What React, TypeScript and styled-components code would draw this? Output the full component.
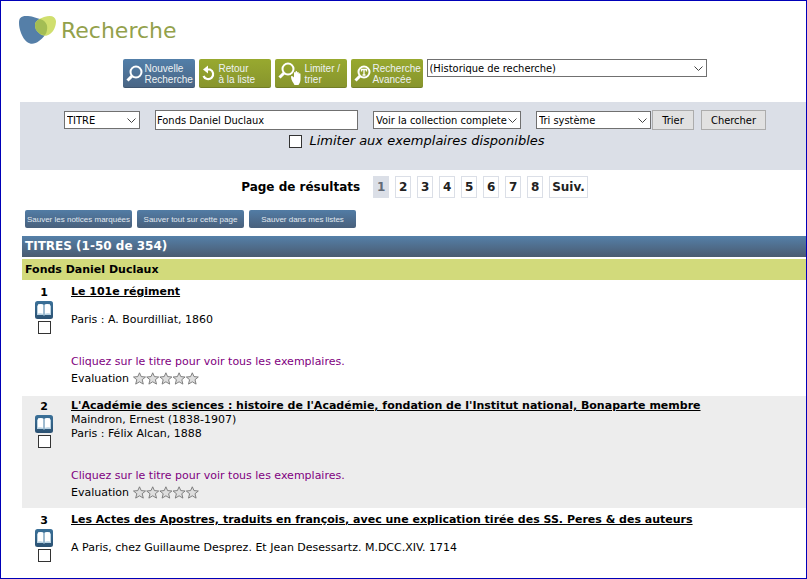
import React from 'react';
import styled, { createGlobalStyle } from 'styled-components';

const uiFont = '"DejaVu Sans Condensed", "DejaVu Sans", sans-serif';
const buttonFont = '"Liberation Sans", Arial, sans-serif';

const GlobalStyle = createGlobalStyle`
  * { box-sizing: border-box; }
  body {
    margin: 0;
    background: #fff;
    color: #000;
    font-family: Verdana, "DejaVu Sans", sans-serif;
    font-size: 11px;
    line-height: 14px;
  }
`;

const Page = styled.div`
  min-height: 100vh;
  border: 1px solid #0000b8;
  padding: 12px 0 8px;
`;

const Header = styled.header`
  display: flex;
  align-items: center;
  gap: 4px;
  padding-left: 18px;
  height: 34px;
`;

const Title = styled.h1`
  margin: 0;
  padding-top: 1px;
  color: #93a14b;
  font-size: 22px;
  font-weight: 400;
  line-height: 32px;
`;

const Toolbar = styled.nav`
  display: flex;
  justify-content: center;
  gap: 4px;
  margin: 12px 0 14px 22px;
`;

const ToolButton = styled.button<{ $primary?: boolean }>`
  display: flex;
  align-items: center;
  gap: 2px;
  width: 72px;
  height: 29px;
  padding: 0 0 0 3px;
  border: 0;
  border-radius: 2px;
  background: ${p => p.$primary
    ? 'linear-gradient(#527fa9, #4a6584)'
    : 'linear-gradient(#98a92f, #87942d)'};
  box-shadow: inset 0 -1px 0 rgba(0, 0, 0, 0.15);
  color: #edf2f3;
  font-family: ${buttonFont};
  font-size: 10px;
  line-height: 11px;
  text-align: left;
  white-space: nowrap;

  svg { flex: none; }
`;

const SelectBox = styled.span<{ $width: number }>`
  display: grid;
  align-items: center;
  width: ${p => p.$width}px;
  height: 18px;

  > * { grid-area: 1 / 1; }
  svg {
    justify-self: end;
    margin: 2px 4px 0 0;
    pointer-events: none;
  }
`;

const Select = styled.select`
  appearance: none;
  width: 100%;
  height: 18px;
  padding: 0 12px 0 2px;
  border: 1px solid #707070;
  border-radius: 0;
  background: #fff;
  color: #000;
  font-family: ${uiFont};
  font-size: 11px;
`;

const SearchForm = styled.form`
  display: flex;
  flex-direction: column;
  align-items: center;
  gap: 2px;
  margin-left: 19px;
  padding: 8px 0 20px 4px;
  background: #dbdfe7;
`;

const SearchFields = styled.div`
  display: flex;
  align-items: center;
  gap: 15px;
`;

const SortGroup = styled.div`
  display: flex;
  align-items: center;
  gap: 1px;
`;

const Actions = styled.div`
  display: flex;
  gap: 7px;
`;

const Query = styled.input`
  width: 203px;
  height: 20px;
  padding: 0 1px;
  border: 1px solid #707070;
  background: #fff;
  color: #000;
  font-family: ${uiFont};
  font-size: 11px;
`;

const FormButton = styled.button<{ $wide?: boolean }>`
  width: ${p => (p.$wide ? 65 : 42)}px;
  height: 20px;
  padding: 0;
  border: 1px solid #acacac;
  background: #e1e1e1;
  color: #000;
  font-family: ${uiFont};
  font-size: 11px;
`;

const Check = styled.input`
  appearance: none;
  width: 13px;
  height: 13px;
  margin: 0;
  border: 1px solid #333;
  background: #fff;

  &:checked { background: #333; box-shadow: inset 0 0 0 2px #fff; }
`;

const Availability = styled.label`
  display: flex;
  gap: 7px;
  align-items: center;
  padding-left: 4px;
  font-size: 13px;
  font-style: italic;
  line-height: 18px;
`;

const Pager = styled.nav`
  display: flex;
  justify-content: center;
  align-items: center;
  gap: 6px;
  margin: 6px 0 12px 22px;
  font-size: 12px;
  font-weight: 700;
  line-height: 20px;
`;

const PagerLabel = styled.span`
  margin-right: 7px;
`;

const PageLink = styled.a<{ $current?: boolean }>`
  min-width: 16px;
  padding: 0 2px;
  border: 1px solid #dbdfe7;
  background: ${p => (p.$current ? '#dbdfe7' : '#fff')};
  color: ${p => (p.$current ? '#626a76' : '#222')};
  text-align: center;
  text-decoration: none;
`;

const SaveBar = styled.div`
  display: flex;
  gap: 5px;
  padding: 0 0 8px 24px;
`;

const SaveButton = styled.button`
  width: 107px;
  height: 18px;
  padding: 0;
  border: 0;
  border-radius: 2px;
  background: linear-gradient(#527ca5, #49607c);
  color: #e0e8ef;
  font-family: ${buttonFont};
  font-size: 8px;
  white-space: nowrap;
`;

const Results = styled.main`
  display: flex;
  flex-direction: column;
  gap: 2px;
  margin-left: 21px;
`;

const ResultsTitle = styled.h2`
  margin: 0;
  padding-left: 3px;
  background: linear-gradient(#5580a9, #4a5b70);
  color: #fff;
  font-size: 12px;
  line-height: 21px;
`;

const GroupTitle = styled.h3`
  margin: 0;
  padding-left: 3px;
  background: #d2da7b;
  font-size: 11px;
  line-height: 21px;
`;

const Records = styled.ol`
  display: flex;
  flex-direction: column;
  gap: 2px;
  margin: 0;
  padding: 0;
  list-style: none;
`;

const Record = styled.li`
  display: flex;
  gap: 5px;
  padding: 3px 0 7px;

  &:nth-child(even) { background: #ededed; }
`;

const Marker = styled.div`
  display: flex;
  flex: none;
  flex-direction: column;
  align-items: center;
  gap: 2px;
  width: 44px;
  padding-top: 1px;
  font-weight: 700;
`;

const MarkerNumber = styled.span`
  line-height: 13px;
`;

const Details = styled.div`
  min-width: 0;
`;

const TitleLink = styled.a`
  color: #000;
  font-weight: 700;
  text-underline-offset: 1px;
`;

const Line = styled.div`
  min-height: 14px;
`;

const Notice = styled.p`
  margin: 28px 0 0;
  color: #800080;
`;

const Rating = styled.div`
  display: flex;
  align-items: center;
  gap: 4px;
  padding-top: 1px;
  line-height: 17px;
`;

const Logo = () => (
  <svg width="38" height="30" viewBox="0 0 38 30" aria-hidden="true">
    <path d="M0 8C0 3 2 1 7 1c6 0 9 1.500 14 3 6 2 8 6 7 11-1 5-4 8-8 11-4 3-8 4-12 1C3 23 0 14 0 8z" fill="#557fa8" />
    <path d="M16 10c0-4 4-6 9-8 7-2 11-1 12 4 0 5-2 10-6 13-4 3-8 2-11-1-3-2-4-5-4-8z" fill="#d0df6e" />
    <path d="M16 10c0-3 2-4.500 5-6 6 2 8 6 7 11-.4 2-1 4-2 5-3 0-5-1-6-2-3-2-4-5-4-8z" fill="#a3bd54" />
  </svg>
);

const Lens = ({ extra }: { extra?: 'hand' | 'text' }) => (
  <svg width={extra === 'hand' ? 25 : 17} height="24" viewBox={extra === 'hand' ? '0 0 25 24' : '0 0 17 24'} fill="none" aria-hidden="true">
    <circle cx="10" cy={extra === 'hand' ? 7 : 10} r="5.500" stroke="#fff" strokeWidth="2" />
    <path d={extra === 'hand' ? 'M6 11L1.500 15.500' : 'M6 14L1.500 18.500'} stroke="#fff" strokeWidth="3" />
    {extra === 'text' && <path d="M7.500 9.500V7.500h5v2M10 7.500v5.500M8.500 13h3" stroke="#fff" strokeWidth="1.300" />}
    {extra === 'hand' && (
      <path d="M13 15c0-1 1-1.500 2-.5l1 1V11c0-1.300 1.500-1.300 1.500 0v-1c0-1.300 1.700-1.300 1.700 0v1c0-1.300 1.600-1.300 1.600 0v1c.2-1.300 1.700-1 1.700.2V17c0 3-1 4-2 6h-4c-1-2-3.500-5-3.500-8z" fill="#fff" />
    )}
  </svg>
);

const BackArrow = () => (
  <svg width="15" height="20" viewBox="0 0 15 20" fill="none" aria-hidden="true">
    <path d="M5 5.500h3a5 5 0 1 1-6.500 6.500" stroke="#fff" strokeWidth="2.200" />
    <path d="M1 5.500L6 1.500v8z" fill="#fff" />
  </svg>
);

const Chevron = () => (
  <svg width="9" height="6" viewBox="0 0 9 6" fill="none" stroke="#444" aria-hidden="true">
    <path d="M.5 .5l4 4 4-4" />
  </svg>
);

const BookIcon = () => (
  <svg width="18" height="18" viewBox="0 0 18 18" role="img" aria-label="Livre">
    <defs>
      <linearGradient id="book" x2="0" y2="1">
        <stop stopColor="#3b7199" />
        <stop offset="1" stopColor="#2c5273" />
      </linearGradient>
    </defs>
    <rect width="18" height="18" rx="2.500" fill="url(#book)" />
    <path d="M2 4.500h1V3.500c2-.8 4-.8 6 .5 2-1.300 4-1.300 6-.5v1h1V14h-6c-.5.800-1.500.800-2 0H2z" fill="#b9d2e2" />
    <path d="M3 3.500c2-.8 4-.8 5.600.5v9C7 12 5 12 3 12.500zM15 3.500c-2-.8-4-.8-5.600.5v9c1.600-1 3.600-1 5.600-.5z" fill="#fff" />
    <path d="M9 4v9.500" stroke="#3b7199" strokeWidth=".8" />
  </svg>
);

const Stars = () => (
  <svg width="66" height="13" viewBox="0 0 66 13" role="img" aria-label="0 sur 5">
    {[0, 1, 2, 3, 4].map(i => (
      <path
        key={i}
        transform={`translate(${i * 13.200} 0)`}
        d="M6.500.8l1.700 3.800 4.300.4-3.300 2.700 1.100 4.400-3.800-2.300-3.800 2.300 1.100-4.400L.5 5l4.300-.4z"
        fill="#dedede"
        stroke="#757575"
        strokeWidth=".9"
      />
    ))}
  </svg>
);

function Dropdown({ label, option, width }: { label: string; option: string; width: number }) {
  return (
    <SelectBox $width={width}>
      <Select aria-label={label}>
        <option>{option}</option>
      </Select>
      <Chevron />
    </SelectBox>
  );
}

const records = [
  { title: 'Le 101e régiment', author: '', imprint: 'Paris : A. Bourdilliat, 1860', full: true },
  {
    title: "L'Académie des sciences : histoire de l'Académie, fondation de l'Institut national, Bonaparte membre",
    author: 'Maindron, Ernest (1838-1907)',
    imprint: 'Paris : Félix Alcan, 1888',
    full: true,
  },
  {
    title: 'Les Actes des Apostres, traduits en françois, avec une explication tirée des SS. Peres & des auteurs',
    author: '',
    imprint: 'A Paris, chez Guillaume Desprez. Et Jean Desessartz. M.DCC.XIV. 1714',
    full: false,
  },
];

export default function App() {
  return (
    <>
      <GlobalStyle />
      <Page>
        <Header>
          <Logo />
          <Title>Recherche</Title>
        </Header>
        <Toolbar aria-label="Outils">
          <ToolButton $primary><Lens /><span>Nouvelle<br />Recherche</span></ToolButton>
          <ToolButton><BackArrow /><span>Retour<br />à la liste</span></ToolButton>
          <ToolButton><Lens extra="hand" /><span>Limiter /<br />trier</span></ToolButton>
          <ToolButton><Lens extra="text" /><span>Recherche<br />Avancée</span></ToolButton>
          <Dropdown label="Historique" option="(Historique de recherche)" width={280} />
        </Toolbar>
        <SearchForm onSubmit={e => e.preventDefault()}>
          <SearchFields>
            <Dropdown label="Index" option="TITRE" width={76} />
            <Query aria-label="Recherche" defaultValue="Fonds Daniel Duclaux" />
            <Dropdown label="Collection" option="Voir la collection complete" width={148} />
            <SortGroup>
              <Dropdown label="Tri" option="Tri système" width={115} />
              <Actions>
                <FormButton type="button">Trier</FormButton>
                <FormButton type="submit" $wide>Chercher</FormButton>
              </Actions>
            </SortGroup>
          </SearchFields>
          <Availability>
            <Check type="checkbox" />
            Limiter aux exemplaires disponibles
          </Availability>
        </SearchForm>
        <Pager aria-label="Pages">
          <PagerLabel>Page de résultats</PagerLabel>
          {['1', '2', '3', '4', '5', '6', '7', '8', 'Suiv.'].map(p => (
            <PageLink key={p} href="#" $current={p === '1'}>{p}</PageLink>
          ))}
        </Pager>
        <SaveBar>
          <SaveButton>Sauver les notices marquées</SaveButton>
          <SaveButton>Sauver tout sur cette page</SaveButton>
          <SaveButton>Sauver dans mes listes</SaveButton>
        </SaveBar>
        <Results>
          <ResultsTitle>TITRES (1-50 de 354)</ResultsTitle>
          <GroupTitle>Fonds Daniel Duclaux</GroupTitle>
          <Records>
            {records.map((r, i) => (
              <Record key={r.title}>
                <Marker>
                  <MarkerNumber>{i + 1}</MarkerNumber>
                  <BookIcon />
                  <Check type="checkbox" aria-label={r.title} />
                </Marker>
                <Details>
                  <TitleLink href="#">{r.title}</TitleLink>
                  <Line>{r.author}</Line>
                  <Line>{r.imprint}</Line>
                  {r.full && (
                    <>
                      <Notice>Cliquez sur le titre pour voir tous les exemplaires.</Notice>
                      <Rating>Evaluation <Stars /></Rating>
                    </>
                  )}
                </Details>
              </Record>
            ))}
          </Records>
        </Results>
      </Page>
    </>
  );
}
